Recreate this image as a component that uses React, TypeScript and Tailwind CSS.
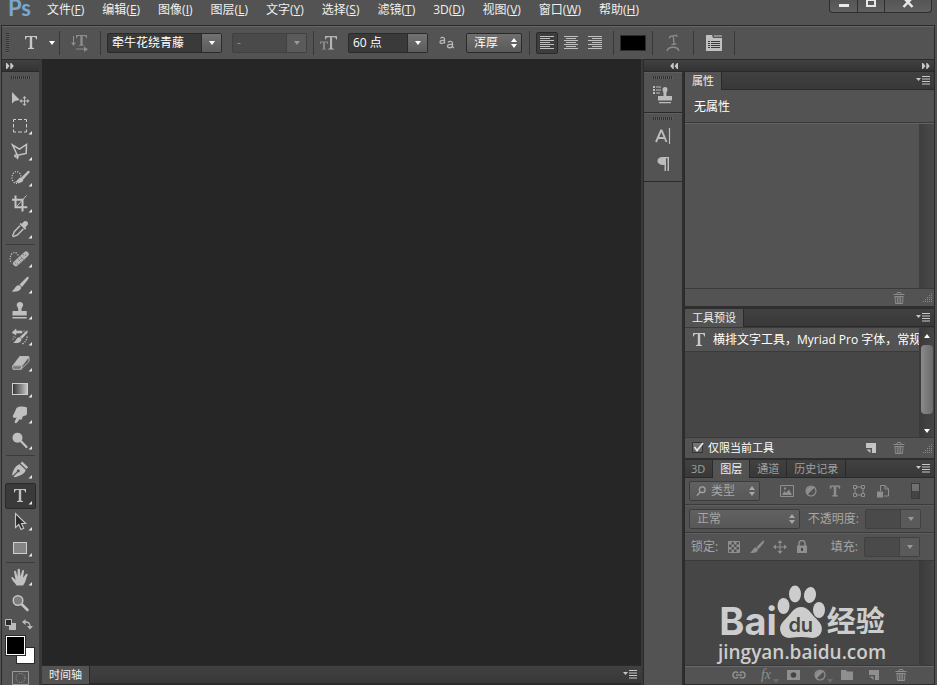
import type { ReactNode } from "react"
import { useState } from "react"
import clsx from "clsx"

const menus = [
  { label: "文件", hotkey: "F" },
  { label: "编辑", hotkey: "E" },
  { label: "图像", hotkey: "I" },
  { label: "图层", hotkey: "L" },
  { label: "文字", hotkey: "Y" },
  { label: "选择", hotkey: "S" },
  { label: "滤镜", hotkey: "T" },
  { label: "3D", hotkey: "D" },
  { label: "视图", hotkey: "V" },
  { label: "窗口", hotkey: "W" },
  { label: "帮助", hotkey: "H" },
]

type Tool = { name: string; icon: ReactNode; single?: boolean }

const typeGlyph = (
  <path d="M6 5h12v3.500h-.8c-.3-1.700-.8-2.500-2.300-2.500h-1.700v9.800c0 1 .4 1.300 1.800 1.300v.9H9v-.9c1.400 0 1.800-.3 1.800-1.300V6H9.100c-1.500 0-2 .8-2.300 2.500H6z" />
)

const toolGroups: Tool[][] = [
  [
    {
      name: "移动工具",
      single: true,
      icon: (
        <>
          <path d="M4 4v11.500l2.800-2.500 5-1z" />
          <path d="M16.500 8l2 2.300h-1.500v2.200h2.300V11l2.200 2-2.200 2v-1.500H17v2.300h1.500l-2 2.200-2-2.200H16v-2.300h-2.300V15l-2.200-2 2.200-2v1.500H16v-2.200h-1.500z" />
        </>
      ),
    },
    {
      name: "矩形选框工具",
      icon: <path d="M5.500 8V5.500H8m2 0h4m2 0h2.500V8m0 2v3.500m0 2V18H16m-2 0h-4m-2 0H5.500v-2.500m0-2V10" fill="none" stroke="#cfcfcf" />,
    },
    {
      name: "多边形套索工具",
      icon: (
        <path d="M9.500 15.500L4.500 5l7 4.200 7-4.700-.3 9-8.700 1.700c-2-.8-3.300 0-2.500 1.200s3.300.8 3-.8m-.5.400c.8.500.7 1.500-.5 3" fill="none" stroke="#c4c4c4" strokeWidth="1.500" />
      ),
    },
    {
      name: "快速选择工具",
      icon: (
        <>
          <ellipse cx="8.500" cy="11.500" rx="4.500" ry="6" fill="none" stroke="#c4c4c4" strokeWidth="1.200" strokeDasharray="1.200 1.300" />
          <path d="M21.500 5L20 4.800l-6.500 6.400 2 2L21.500 6.500z" />
          <path d="M13 11.500c1.500 0 2.700 1.300 2.300 2.800-1 3-6 3-9 1.700 3-.3 4-4.500 6.700-4.500z" />
        </>
      ),
    },
    {
      name: "裁剪工具",
      icon: (
        <>
          <path d="M7.500 3.500v11.800h11.800M4 7.700h10.500v11.800" fill="none" stroke="#c4c4c4" strokeWidth="2" />
          <path d="M18.500 3.500L8.500 14.500" fill="none" stroke="#c4c4c4" />
        </>
      ),
    },
    {
      name: "吸管工具",
      icon: (
        <>
          <path d="M19.300 3.700c-1.200-1.200-2.800-.8-3.800.2l-1.800 1.900-1-.9-1.200 1.200 5.600 5.600 1.200-1.200-1-1 1.800-1.900c1-1 1.400-2.700.2-3.900z" />
          <path d="M12 7.700L6.500 13.500c-.8.900-.5 2-1.600 3.500-.5.800.600 1.900 1.400 1.300 1.300-1 2.500-.7 3.300-1.500L15.300 11" fill="none" stroke="#c4c4c4" strokeWidth="1.400" />
        </>
      ),
    },
  ],
  [
    {
      name: "污点修复画笔工具",
      icon: (
        <>
          <ellipse cx="6.500" cy="11.500" rx="4.300" ry="6" fill="none" stroke="#c4c4c4" strokeWidth="1.200" strokeDasharray="1.200 1.300" />
          <path d="M7.500 17L18.500 6.800" stroke="#535353" strokeWidth="8" strokeLinecap="round" />
          <path d="M7.800 16.500L18 7.200" stroke="#b4b4b4" strokeWidth="5.500" strokeLinecap="round" />
          <path d="M9.800 11.800l4.500 4.500M12.500 9.300l4.300 4.500" stroke="#777" strokeWidth=".7" />
          <path d="M7 16h1m1 1h1m5-9.500h1m1 1h1m-5 3.500h1m-2 0h.6" stroke="#666" strokeWidth=".8" />
        </>
      ),
    },
    {
      name: "画笔工具",
      icon: (
        <>
          <path d="M20.500 3.700c-1-.2-1.500.3-2.200 1L11.500 11.500l2.500 2.500 6-7.500c.6-.9 1-1.800.5-2.800z" />
          <path d="M10.500 12.200c1.700.1 2.900 1.300 2.600 2.900-.8 3.400-6 4.200-9.800 3.200 3.500-.8 3.700-6 7.200-6.100z" />
        </>
      ),
    },
    {
      name: "仿制图章工具",
      icon: (
        <>
          <path d="M12 3c2 0 3.200 1.400 3.200 3s-1.700 2.500-1.700 4v2h5.200v4.500H4.500V12h5.700v-2c0-1.500-1.500-2.400-1.500-4S10 3 12 3z" />
          <path d="M4.500 18h14.200v1.500H4.500z" />
        </>
      ),
    },
    {
      name: "历史记录画笔工具",
      icon: (
        <>
          <path d="M19.500 5.500c-.8 0-1 .2-1.500.8L12 11.800l2 2 5.500-6z" />
          <path d="M11.200 12.300c1.500.1 2.500 1.200 2.200 2.600-.7 2.800-5 3.800-8.400 2.900 3-.8 3.200-5.400 6.200-5.500z" />
          <path d="M4 7.500l4-3.500v2h6v2H8v2zM15 6h2M5 11.500l3 1M4 14h2" stroke="#c4c4c4" strokeWidth=".6" />
          <path d="M19 11.500c0 3-1.500 6-5 7.500" fill="none" stroke="#c4c4c4" strokeWidth="1.300" strokeDasharray="1.300 1.300" />
        </>
      ),
    },
    {
      name: "橡皮擦工具",
      icon: (
        <>
          <path d="M11.500 5.500h9.500L13 18.300H5l-.5-3.500z" fill="#777" />
          <path d="M11.500 5.500h9.500l-6.700 8.800H4.800z" fill="#bdbdbd" />
          <path d="M4.500 14.800h9.300l-.8 3.500H5zM21 6v4.500l-8 7.800.8-3.500zM11.500 5.500h9.500" fill="none" stroke="#b8b8b8" />
        </>
      ),
    },
    {
      name: "渐变工具",
      icon: <rect x="4.500" y="6.500" width="15" height="11" fill="url(#tool-gradient)" stroke="#cfcfcf" />,
    },
    {
      name: "涂抹工具",
      icon: (
        <path d="M8.500 5c3-1.800 7-1.800 10.500-.5v6.700c-1.200 1.800-3 1.300-4.200 2.300-.8 1-.3 2.500-1.300 3-.8.400-1.400 0-1.700-.6l-3 3.800c-.8 1-2.500.2-2.100-1.200l2-4.200c-1.600 1-3 .7-3.700-.3-.7-1.500 2-4.500 3.500-9z" />
      ),
    },
    {
      name: "减淡工具",
      icon: (
        <>
          <circle cx="9.500" cy="8.700" r="5" />
          <path d="M13 12.200l5.500 5.800" stroke="#c4c4c4" strokeWidth="2.200" strokeLinecap="round" />
        </>
      ),
    },
  ],
  [
    {
      name: "钢笔工具",
      icon: (
        <>
          <path d="M14.200 3.500l6 5.700-1.800 1.800-6-5.700z" />
          <path d="M11.700 6.300l6 5.700c-.8 3.500-5 5.800-11.400 7.200l-.7-.7 4.200-4.200a1.500 1.500 0 1 0-.9-.9l-4.200 4.200-.6-.6C5.500 11.200 8 7 11.700 6.300z" />
        </>
      ),
    },
    { name: "横排文字工具", icon: typeGlyph },
    {
      name: "路径选择工具",
      icon: <path d="M7.500 3.500v14l3.300-3 2.200 5 2.700-1.200-2.200-4.800h4.200z" fill="#2b2b2b" stroke="#c8c8c8" strokeWidth="1.100" />,
    },
    {
      name: "矩形工具",
      icon: <rect x="5.500" y="6.500" width="13" height="11" fill="#858585" stroke="#cfcfcf" />,
    },
  ],
  [
    {
      name: "抓手工具",
      icon: (
        <path d="M8.500 20.500c-.8-2-3.700-4-5-7-.5-1.500 1-1.800 1.900-.8l2.200 2.200-1.500-8c-.2-1.400 1.500-1.700 1.900-.3l1.500 5.200.2-7c0-1.400 2-1.400 2.200 0l.5 6.800 1.700-5.900c.4-1.300 2.200-.8 1.900.5l-1 6.500 2.800-3.500c.9-1 2.300-.2 1.700 1-1.500 2.800-1.700 7.300-4.500 10.300z" />
      ),
    },
    {
      name: "缩放工具",
      single: true,
      icon: (
        <>
          <circle cx="10" cy="9.500" r="4.800" fill="#7d7d7d" stroke="#c4c4c4" strokeWidth="1.500" />
          <path d="M14 13.500l5.500 5.500" stroke="#c4c4c4" strokeWidth="2.500" strokeLinecap="round" />
        </>
      ),
    },
  ],
]

function CaretDown({ className }: { className?: string }) {
  return (
    <svg viewBox="0 0 6 4" className={clsx("h-1 w-1.5", className)} fill="currentColor">
      <path d="M0 0h6L3 4z" />
    </svg>
  )
}

function Grip({ vertical = false }: { vertical?: boolean }) {
  return vertical ? (
    <div className="h-5 w-[3px] bg-[repeating-linear-gradient(180deg,#323232_0_1px,#5c5c5c_1px_2px)]" />
  ) : (
    <div className="h-[3px] w-5 bg-[repeating-linear-gradient(90deg,#323232_0_1px,#5c5c5c_1px_2px)]" />
  )
}

function Divider({ className }: { className?: string }) {
  return <div className={clsx("h-6 w-px shrink-0 bg-[#383838]", className)} />
}

function Chevrons({ left = false, label }: { left?: boolean; label: string }) {
  return (
    <button type="button" aria-label={label} className="text-[#c8c8c8]">
      <svg viewBox="0 0 8 6" className={clsx("h-1.5 w-2", left && "rotate-180")} fill="currentColor">
        <path d="M0 0h1l2.500 3L1 6H0zM4.300 0h1l2.500 3-2.500 3h-1z" />
      </svg>
    </button>
  )
}

type DropdownProps = {
  label: string
  value: string
  className?: string
  disabled?: boolean
}

// sunken value with a raised arrow button at its right end
function ComboBox({ label, value, className, disabled }: DropdownProps) {
  return (
    <div
      className={clsx(
        "relative h-5 shrink-0 rounded-xs border",
        disabled ? "border-[#404040] bg-[#4a4a4a] text-[#8f8f8f]" : "border-[#2a2a2a] bg-[#3a3a3a] text-white",
        className,
      )}
    >
      <select aria-label={label} defaultValue={value} disabled={disabled} className="block h-full w-full appearance-none pl-1 text-xs leading-4 opacity-100 outline-none">
        <option>{value}</option>
      </select>
      <span
        className={clsx(
          "pointer-events-none absolute inset-y-0 right-0 flex w-5 items-center justify-center border-l",
          disabled ? "border-[#404040] bg-[#5a5a5a] text-[#9a9a9a]" : "border-[#2a2a2a] bg-linear-to-b from-[#727272] to-[#5c5c5c] text-white",
        )}
      >
        <CaretDown />
      </span>
    </div>
  )
}

// raised pop-up list with up and down arrows
function PopupList({ label, value, className, children }: DropdownProps & { children?: ReactNode }) {
  return (
    <div className={clsx("relative h-5 shrink-0 rounded-xs border bg-linear-to-b", className)}>
      {children}
      <select
        aria-label={label}
        defaultValue={value}
        className={clsx("block h-full w-full appearance-none text-xs leading-4 outline-none", children ? "pl-[21px]" : "pl-[7px]")}
      >
        <option>{value}</option>
      </select>
      <svg viewBox="0 0 6 10" className="pointer-events-none absolute top-1 right-1 h-2.5 w-1.5" fill="currentColor">
        <path d="M3 0l3 4H0zM3 10l3-4H0z" />
      </svg>
    </div>
  )
}

function PanelMenuButton() {
  return (
    <button type="button" aria-label="面板菜单" className="mr-1 ml-auto self-center text-[#c8c8c8]">
      <svg viewBox="0 0 14 9" className="h-[9px] w-3.5" fill="currentColor">
        <path d="M0 2h5L2.500 5zM6 0h8v1H6zM6 2.500h8v1H6zM6 5h8v1H6zM6 7.500h8v1H6z" />
      </svg>
    </button>
  )
}

function PanelTabs({ tabs, active }: { tabs: string[]; active: string }) {
  return (
    <div className="flex h-[18px] shrink-0 bg-linear-to-b from-[#414141] to-[#383838]">
      {tabs.map((tab) => (
        <button
          key={tab}
          type="button"
          className={clsx(
            "border-r border-[#2a2a2a] px-[7px] text-[11px] leading-4",
            tab === active ? "bg-[#535353] text-[#f0f0f0]" : "border-b text-[#a0a0a0]",
            tabs.length === 1 || "first:pl-1.5 not-first:px-[7px]",
          )}
        >
          {tab}
        </button>
      ))}
      <div className="flex grow border-b border-[#2a2a2a]">
        <PanelMenuButton />
      </div>
    </div>
  )
}

function TrashIcon() {
  return (
    <svg viewBox="0 0 12 12" className="h-3 w-3" fill="none" stroke="currentColor">
      <path d="M.5 2.500h11M4 2.500v-1q0-1 1-1h2q1 0 1 1v1M1.500 4.500h9M2 4.500l.5 7h7l.5-7M4.300 5v6M6 5v6M7.700 5v6" />
    </svg>
  )
}

function NewItemIcon() {
  return (
    <svg viewBox="0 0 12 12" className="h-3 w-3" fill="currentColor">
      <path d="M1 1h10v10H7V6H1zM1.500 7.500H5.500V11z" />
    </svg>
  )
}

function AdjustIcon() {
  return (
    <svg viewBox="0 0 12 12" className="h-3 w-3">
      <circle cx="6" cy="6" r="5" fill="none" stroke="currentColor" strokeWidth="1.200" />
      <path d="M9.500 2.500A5 5 0 0 0 2.500 9.500z" fill="currentColor" />
    </svg>
  )
}

function ResizeCorner() {
  return (
    <svg viewBox="0 0 9 9" className="h-[9px] w-[9px]" fill="#8a8a8a">
      <path d="M8 0h1v1H8zM8 2h1v1H8zM6 2h1v1H6zM8 4h1v1H8zM6 4h1v1H6zM4 4h1v1H4zM8 6h1v1H8zM6 6h1v1H6zM4 6h1v1H4zM2 6h1v1H2zM8 8h1v1H8zM6 8h1v1H6zM4 8h1v1H4zM2 8h1v1H2zM0 8h1v1H0z" />
    </svg>
  )
}

function IconButton({ label, className, children }: { label: string; className?: string; children: ReactNode }) {
  return (
    <button type="button" aria-label={label} className={clsx("flex shrink-0 items-center justify-center", className)}>
      {children}
    </button>
  )
}

function TitleBar() {
  return (
    <header className="flex h-[25px] shrink-0 items-start">
      <div className="w-[38px] pl-2 font-['Lato'] text-[22px] leading-4 font-bold text-[#7aa7d0]">Ps</div>
      <nav className="flex whitespace-nowrap">
        {menus.map((menu) => (
          <button key={menu.label} type="button" className="px-[9px] text-xs leading-5 text-[#f0f0f0]">
            {menu.label}(<u>{menu.hotkey}</u>)
          </button>
        ))}
      </nav>
      <div className="mr-[5px] ml-auto flex h-[13px] rounded-b-sm border border-t-0 border-[#2e2e2e] bg-linear-to-b from-[#555] to-[#606060] text-[#e8e8e8]">
        <IconButton label="最小化" className="w-7 border-r border-[#2e2e2e]">
          <svg viewBox="0 0 12 12" className="h-3 w-3" fill="currentColor">
            <path d="M1 4h10v3H1z" />
          </svg>
        </IconButton>
        <IconButton label="最大化" className="w-[27px] border-r border-[#2e2e2e]">
          <svg viewBox="0 0 12 12" className="h-3 w-3" fill="none" stroke="currentColor" strokeWidth="2">
            <path d="M2 0v6h8V0" />
            <path d="M2 .5h8" strokeWidth="1" />
          </svg>
        </IconButton>
        <IconButton label="关闭" className="w-[46px]">
          <svg viewBox="0 0 12 12" className="h-3 w-3" fill="none" stroke="currentColor" strokeWidth="2.500">
            <path d="M1.500-2.500l9 9.500M10.500-2.500l-9 9.500" />
          </svg>
        </IconButton>
      </div>
    </header>
  )
}

function AlignIcon({ align }: { align: "left" | "center" | "right" }) {
  const widths = [14, 10, 14, 10, 14, 10, 14]
  return (
    <svg viewBox="0 0 14 14" className="h-3.5 w-3.5" fill="#c0c0c0">
      {widths.map((w, i) => (
        <rect key={i} x={align === "left" ? 0 : align === "center" ? (14 - w) / 2 : 14 - w} y={i * 2} width={w} height="1" />
      ))}
    </svg>
  )
}

function OptionsBar() {
  const [align, setAlign] = useState<"left" | "center" | "right">("left")
  const alignments = [
    { value: "left", label: "左对齐" },
    { value: "center", label: "居中对齐" },
    { value: "right", label: "右对齐" },
  ] as const

  return (
    <div className="mr-0.5 ml-px flex h-[34px] shrink-0 items-center border-x border-t border-[#2a2a2a] pl-1 shadow-[inset_0_1px_#666]">
      <Grip vertical />
      <IconButton label="工具预设" className="ml-4 h-5 gap-3 text-[#c8c8c8]">
        <svg viewBox="6 5 12 13" className="h-[13px] w-3" fill="currentColor">
          {typeGlyph}
        </svg>
        <CaretDown className="text-white" />
      </IconButton>
      <Divider className="mx-1" />
      <IconButton label="切换文本取向" className="w-8 text-[#8c8c8c]">
        <svg viewBox="0 0 18 18" className="h-[18px] w-[18px]" fill="currentColor">
          <path d="M5 1h11v3.300h-.8c-.2-1.500-.8-2.200-2-2.200h-1.500v7.900c0 .8.500 1 1.500 1v.8H7.800V11c1 0 1.500-.2 1.500-1V2.100H7.800c-1.200 0-1.800.7-2 2.200H5z" />
          <path d="M2.500 2v8M5 15h9" stroke="currentColor" />
          <path d="M0 8.500h5L2.500 12zM13 12.500V18l4-2.700z" />
        </svg>
      </IconButton>
      <Divider className="mr-1.5 ml-1" />
      <ComboBox label="字体" value="牵牛花绕青藤" className="w-[115px]" />
      <ComboBox label="字体样式" value="-" disabled className="ml-2.5 w-[75px]" />
      <Divider className="mx-1.5" />
      <svg viewBox="0 0 18 16" className="h-4 w-[18px] shrink-0" fill="#b4b4b4">
        <path d="M5 1h12v3.500h-.8c-.3-1.600-.9-2.300-2.400-2.300h-1.700v10.300c0 .9.500 1.200 1.800 1.200v.8H8.200v-.8c1.300 0 1.800-.3 1.800-1.200V2.200H8.200C6.700 2.200 6.100 2.900 5.800 4.500H5z" />
        <path d="M0 6.500h8V9h-.7c-.2-1-.6-1.400-1.500-1.400h-.9v5.600c0 .6.300.8 1.200.8v.6H1.900V14c.9 0 1.200-.2 1.200-.8V7.600h-.9c-.9 0-1.300.4-1.500 1.400H0z" fill="#8e8e8e" />
      </svg>
      <ComboBox label="字体大小" value="60 点" className="ml-2.5 w-20" />
      <svg viewBox="0 0 16 14" className="mx-[11px] h-3.5 w-4 shrink-0" fill="none" stroke="#b8b8b8" strokeWidth="1.300">
        <path d="M1.500 2.500c1-1.500 4-1.500 4 .5v4.500M5.500 4.500c-3-.3-4.500.2-4.500 1.600 0 1.800 3.500 1.800 4.500-.4M9 6.500c1-1.500 4.500-1.500 4.500.5v4l1.500 1M13.500 8.500c-3-.3-5 .2-5 1.800 0 2 4 2 5-.4" />
      </svg>
      <PopupList label="消除锯齿" value="浑厚" className="w-14 border-[#2a2a2a] from-[#6e6e6e] to-[#5a5a5a] text-white" />
      <Divider className="mr-1.5 ml-[7px]" />
      <div className="flex gap-0.5">
        {alignments.map((item) => (
          <button
            key={item.value}
            type="button"
            aria-label={item.label}
            aria-pressed={align === item.value}
            onClick={() => setAlign(item.value)}
            className={clsx("flex h-[22px] w-[22px] items-center justify-center rounded-xs border", align === item.value ? "border-[#2a2a2a] bg-[#3d3d3d]" : "border-transparent")}
          >
            <AlignIcon align={item.value} />
          </button>
        ))}
      </div>
      <Divider className="mr-1.5 ml-[7px]" />
      <button type="button" aria-label="文本颜色" className="h-4 w-[26px] border border-[#2e2e2e] bg-black" />
      <Divider className="ml-1.5" />
      <IconButton label="创建文字变形" className="w-10">
        <svg viewBox="0 0 14 18" className="h-[18px] w-3.5" fill="none" stroke="#8c8c8c" strokeWidth="1.300">
          <path d="M3.500 4.500l.3-2 6.700-1.300.7 1.800M7.300 2l.7 8M5.500 10.700l5-.9M1 17c1.500-5 10.500-5 12 0" />
        </svg>
      </IconButton>
      <Divider />
      <IconButton label="切换字符和段落面板" className="w-10">
        <svg viewBox="0 0 16 17" className="h-[17px] w-4">
          <path d="M0 1h6l1 3h9v13H0z" fill="#c0c0c0" />
          <path d="M7.500 1H16v2H8z" fill="#8e8e8e" />
          <path d="M2 7.500h2m1 0h9M2 9.500h2m1 0h9M2 11.500h2m1 0h9M2 13.500h2m1 0h9" stroke="#3a3a3a" />
        </svg>
      </IconButton>
      <Divider />
    </div>
  )
}

function Toolbar() {
  const [activeTool, setActiveTool] = useState("横排文字工具")

  return (
    <aside className="flex w-[37px] shrink-0 flex-col">
      <div className="flex h-[13px] shrink-0 items-center border-y border-[#2a2a2a] bg-linear-to-b from-[#414141] to-[#333] pl-1">
        <Chevrons label="展开面板" />
      </div>
      <div className="flex h-[15px] shrink-0 items-start justify-center pt-1">
        <Grip />
      </div>
      {toolGroups.map((group, i) => (
        <div key={i} className={clsx("flex flex-col items-center", i > 0 && "before:my-px before:h-px before:w-[29px] before:bg-[#3a3a3a]")}>
          {group.map((tool) => (
            <button
              key={tool.name}
              type="button"
              aria-label={tool.name}
              onClick={() => setActiveTool(tool.name)}
              className={clsx(
                "flex h-[26px] w-[31px] items-center rounded-xs border pl-0.5",
                activeTool === tool.name ? "border-[#2a2a2a] bg-[#3a3a3a]" : "border-transparent",
              )}
            >
              <svg viewBox="0 0 24 24" className="h-6 w-6 shrink-0" fill="#c0c0c0">
                <defs>
                  <linearGradient id="tool-gradient">
                    <stop offset="0" stopColor="#333" />
                    <stop offset="1" stopColor="#c8c8c8" />
                  </linearGradient>
                </defs>
                {tool.icon}
                {!tool.single && <path d="M24 17v3.500h-3.500z" fill="#e8e8e8" />}
              </svg>
            </button>
          ))}
        </div>
      ))}
      <div className="flex h-4 shrink-0 items-center justify-between pr-1.5 pl-[3px]">
        <IconButton label="默认前景色和背景色">
          <svg viewBox="0 0 11 11" className="h-[11px] w-[11px]">
            <path d="M4 4h7v7H4z" fill="#bbb" />
            <path d="M.5.5h6v6h-6z" fill="#2a2a2a" stroke="#bbb" />
          </svg>
        </IconButton>
        <IconButton label="切换前景色和背景色">
          <svg viewBox="0 0 11 11" className="h-[11px] w-[11px]" fill="#bbb">
            <path d="M0 3l3.500-3v2.300c3.500 0 5 1.700 5 4.700H11l-3 3.500L5 7h2.300c0-2-1.300-3.200-3.800-3.200V6z" />
          </svg>
        </IconButton>
      </div>
      <div className="mt-1 grid h-[34px] shrink-0 grid-cols-[10px_9px_10px] grid-rows-[11px_8px_9px] pl-1">
        <button type="button" aria-label="背景色" className="col-[2/4] row-[2/4] border border-[#2a2a2a] bg-white" />
        <button type="button" aria-label="前景色" className="z-10 col-[1/3] row-[1/3] border border-white bg-black outline outline-[#2a2a2a]" />
      </div>
      <IconButton label="以快速蒙版模式编辑" className="h-4 shrink-0">
        <svg viewBox="0 0 17 14" className="h-3.5 w-[17px]" fill="none" stroke="#999">
          <path d="M.5.5h16v13H.5z" />
          <circle cx="8.500" cy="7" r="4.500" strokeDasharray="1.200 1.200" />
        </svg>
      </IconButton>
    </aside>
  )
}

function CanvasArea() {
  return (
    <main className="flex min-w-0 grow flex-col border-r-2 border-l-3 border-[#3a3a3a]">
      <div className="grow bg-[#262626]" />
      <div className="shrink-0 border-y border-[#2a2a2a] shadow-[inset_0_1px_#444]">
        <PanelTabs tabs={["时间轴"]} active="时间轴" />
      </div>
    </main>
  )
}

function Dock() {
  return (
    <div className="flex w-10 shrink-0 flex-col border-r-2 border-[#2e2e2e] text-[#bcbcbc]">
      <div className="flex h-[41px] flex-col items-center border-b border-[#2a2a2a] pt-1 shadow-[inset_0_1px_#5e5e5e]">
        <Grip />
        <IconButton label="仿制源" className="h-8 w-7">
          <svg viewBox="0 0 20 18" className="h-[18px] w-5" fill="currentColor">
            <path d="M0 0h2v2H0zM3 .5h5v1H3zM0 3h2v2H0zM3 3.500h5v1H3zM0 6h2v2H0zM3 6.500h4v1H3z" />
            <path d="M12 1c1.600 0 2.500 1 2.500 2.500S13.400 6 13.400 7.500V10H19v4.500H5V10h5.500V7.500C10.500 6 9.500 5 9.500 3.500S10.400 1 12 1zM6 16h12v1.200H6z" />
          </svg>
        </IconButton>
      </div>
      <div className="flex h-[69px] flex-col items-center border-b border-[#2a2a2a] pt-1 shadow-[inset_0_1px_#5e5e5e]">
        <Grip />
        <IconButton label="字符" className="mt-0.5 h-7 w-7">
          <svg viewBox="0 0 16 18" className="h-[18px] w-4" fill="none" stroke="currentColor">
            <path d="M1 15L6 3.500h.7L11.500 15M3 11h7" strokeWidth="1.900" />
            <path d="M14.500 1v16" strokeWidth="1.200" />
          </svg>
        </IconButton>
        <IconButton label="段落" className="h-7 w-7">
          <svg viewBox="0 0 14 16" className="h-4 w-3.5" fill="currentColor">
            <path d="M13 1v14h-1.500V2.200H10V15H8.500V9C4 9 1.500 7.500 1.500 5s2-4 5.500-4z" />
          </svg>
        </IconButton>
      </div>
    </div>
  )
}

function PropertiesPanel() {
  return (
    <section className="flex shrink-0 flex-col border-b-2 border-[#2e2e2e]">
      <PanelTabs tabs={["属性"]} active="属性" />
      <p className="h-[33px] border-b border-[#3a3a3a] px-[9px] text-xs leading-[34px] text-white">无属性</p>
      <div className="flex h-[165px] justify-end border-t border-[#646464]">
        <div className="w-[15px] bg-linear-to-r from-[#3e3e3e] to-[#4a4a4a]" />
      </div>
      <div className="flex h-[18px] items-center justify-end border-t border-[#3a3a3a] pr-0.5 text-[#8a8a8a]">
        <IconButton label="删除属性" className="mr-[18px]">
          <TrashIcon />
        </IconButton>
        <ResizeCorner />
      </div>
    </section>
  )
}

function ToolPresetsPanel() {
  return (
    <section className="flex shrink-0 flex-col border-y border-[#2e2e2e]">
      <PanelTabs tabs={["工具预设"]} active="工具预设" />
      <div className="flex h-[111px] border-y border-[#3a3a3a] bg-[#464646]">
        <ul className="min-w-0 grow">
          <li className="flex h-6 items-center gap-2 overflow-hidden border-b border-[#3a3a3a] bg-[#535353] pl-2 text-xs whitespace-nowrap text-white">
            <svg viewBox="6 5 12 13" className="h-[13px] w-3 shrink-0" fill="#c8c8c8">
              {typeGlyph}
            </svg>
            横排文字工具，Myriad Pro 字体，常规
          </li>
        </ul>
        <div className="flex w-[15px] shrink-0 flex-col items-center justify-between bg-linear-to-r from-[#3a3a3a] to-[#464646] pt-1.5 pb-1 text-white">
          <CaretDown className="rotate-180" />
          <div className="mb-2 h-[69px] w-3 rounded-sm bg-linear-to-r from-[#8a8a8a] to-[#6a6a6a]" />
          <CaretDown />
        </div>
      </div>
      <div className="flex h-5 items-center pr-0.5 pl-[7px] text-[#8a8a8a]">
        <label className="flex items-center gap-1 text-[11px] leading-4 text-white">
          <span className="relative h-3 w-3">
            <input
              type="checkbox"
              defaultChecked
              className="peer block h-[11px] w-[11px] appearance-none border border-[#333] bg-linear-to-b from-[#777] to-[#606060]"
            />
            <svg viewBox="0 0 12 12" className="pointer-events-none absolute inset-0 hidden h-3 w-3 peer-checked:block" fill="none" stroke="#e8e8e8" strokeWidth="1.700">
              <path d="M2.500 5l2.500 3.500L11 1" />
            </svg>
          </span>
          仅限当前工具
        </label>
        <IconButton label="创建新的工具预设" className="ml-auto text-[#c4c4c4]">
          <NewItemIcon />
        </IconButton>
        <IconButton label="删除工具预设" className="mr-[18px] ml-4">
          <TrashIcon />
        </IconButton>
        <ResizeCorner />
      </div>
    </section>
  )
}

function LayersPanel() {
  return (
    <section className="flex min-h-0 grow flex-col border-y border-[#2e2e2e] text-[#a6a6a6]">
      <PanelTabs tabs={["3D", "图层", "通道", "历史记录"]} active="图层" />
      <div className="flex h-[27px] shrink-0 items-center border-b border-[#3a3a3a] px-1">
        <PopupList label="滤镜类型" value="类型" className="w-[71px] border-[#3c3c3c] from-[#616161] to-[#585858]">
          <svg viewBox="0 0 12 12" className="pointer-events-none absolute top-1 left-1.5 h-2.5 w-2.5" fill="none" stroke="currentColor" strokeWidth="1.500">
            <circle cx="7.500" cy="4.500" r="3.500" />
            <path d="M5 7.500l-4 4" />
          </svg>
        </PopupList>
        <div className="ml-5 flex items-center gap-2.5 text-[#8f8f8f]">
          <IconButton label="像素图层滤镜" className="w-3.5">
            <svg viewBox="0 0 14 12" className="h-3 w-3.5">
              <path d="M.5.5h13v11H.5z" fill="none" stroke="currentColor" />
              <path d="M2 10l2.500-4L6 8l3-3.500L12 10zM4 2.500h2v2H4z" fill="currentColor" />
            </svg>
          </IconButton>
          <IconButton label="调整图层滤镜" className="w-3.5">
            <AdjustIcon />
          </IconButton>
          <IconButton label="文字图层滤镜" className="w-3.5">
            <svg viewBox="5 4 14 15" className="h-3 w-3" fill="currentColor" stroke="currentColor" strokeWidth=".8">
              {typeGlyph}
            </svg>
          </IconButton>
          <IconButton label="形状图层滤镜" className="w-3.5">
            <svg viewBox="0 0 12 12" className="h-3 w-3" fill="none" stroke="currentColor">
              <path d="M2 3.500v5M10 3.500v5M3.500 2h5M3.500 10h5M.5.5h3v3h-3zM8.500.5h3v3h-3zM.5 8.500h3v3h-3zM8.500 8.500h3v3h-3z" />
            </svg>
          </IconButton>
          <IconButton label="智能对象滤镜" className="w-3.5">
            <svg viewBox="0 0 12 13" className="h-[13px] w-3">
              <path d="M3.500 6V.5H8L11.500 4v7H7M8 .5V4h3.500" fill="none" stroke="currentColor" />
              <path d="M0 6.500h6v6H0z" fill="currentColor" />
            </svg>
          </IconButton>
        </div>
        <button type="button" aria-label="打开或关闭图层滤镜" className="mr-2.5 ml-auto flex h-4 w-[9px] items-start border border-[#3a3a3a] bg-[#444]">
          <span className="block h-[7px] w-full bg-[#707070]" />
        </button>
      </div>
      <div className="flex h-7 shrink-0 items-center border-b border-[#3a3a3a] px-1 text-xs shadow-[inset_0_1px_#5e5e5e]">
        <PopupList label="混合模式" value="正常" className="w-[111px] border-[#3c3c3c] from-[#616161] to-[#585858]" />
        <span className="w-[65px] pr-1.5 text-right whitespace-nowrap">不透明度:</span>
        <ComboBox label="不透明度" value="" disabled className="w-14" />
      </div>
      <div className="flex h-7 shrink-0 items-center border-b border-[#3a3a3a] pl-1.5 text-xs shadow-[inset_0_1px_#5e5e5e]">
        <span className="w-9">锁定:</span>
        <div className="flex grow items-center gap-2 text-[#8f8f8f]">
          <IconButton label="锁定透明像素" className="w-3.5">
            <svg viewBox="0 0 12 12" className="h-3 w-3">
              <path d="M.5.5h11v11H.5z" fill="none" stroke="currentColor" />
              <path d="M1 1h2.500v2.500H1zM6 1h2.500v2.500H6zM3.500 3.500H6V6H3.500zM8.500 3.500H11V6H8.500zM1 6h2.500v2.500H1zM6 6h2.500v2.500H6zM3.500 8.500H6V11H3.500zM8.500 8.500H11V11H8.500z" fill="currentColor" />
            </svg>
          </IconButton>
          <IconButton label="锁定图像像素" className="w-4">
            <svg viewBox="3 3 18 17" className="h-3.5 w-4 shrink-0" fill="currentColor">
              <path d="M20.500 3.700c-1-.2-1.500.3-2.200 1L11.500 11.500l2.500 2.500 6-7.500c.6-.9 1-1.800.5-2.800z" />
              <path d="M10.500 12.200c1.700.1 2.900 1.300 2.600 2.900-.8 3.400-6 4.200-9.800 3.200 3.500-.8 3.700-6 7.200-6.100z" />
            </svg>
          </IconButton>
          <IconButton label="锁定位置" className="w-3.5">
            <svg viewBox="0 0 14 14" className="h-3.5 w-3.5" fill="currentColor">
              <path d="M7 0l2.500 3h-2v3.500H11v-2L14 7l-3 2.500v-2H7.500V11h2L7 14l-2.500-3h2V7.500H3v2L0 7l3-2.500v2h3.500V3h-2z" />
            </svg>
          </IconButton>
          <IconButton label="锁定全部" className="w-3.5">
            <svg viewBox="0 0 12 13" className="h-[13px] w-3">
              <path d="M3 6V3.500a3 3 0 0 1 6 0V6" fill="none" stroke="currentColor" strokeWidth="1.500" />
              <path d="M1 5.500h10V13H1z" fill="currentColor" />
              <path d="M5 8h2v3H5z" fill="#444" />
            </svg>
          </IconButton>
        </div>
        <span className="pr-1.5">填充:</span>
        <ComboBox label="填充" value="" disabled className="mr-3.5 w-14" />
      </div>
      <div className="flex min-h-0 grow bg-[#464646]">
        <div className="flex grow flex-col items-center justify-end text-[#cdcdcd]">
          <Watermark />
        </div>
        <div className="w-[15px] bg-linear-to-r from-[#3a3a3a] to-[#464646]" />
      </div>
      <div className="flex h-[19px] shrink-0 items-center gap-[13px] border-t border-[#3a3a3a] pl-[47px] text-[#8f8f8f] shadow-[inset_0_1px_#6a6a6a]">
        <IconButton label="链接图层" className="w-3.5">
          <svg viewBox="0 0 14 8" className="h-2 w-3.5" fill="none" stroke="currentColor" strokeWidth="1.500">
            <path d="M6 2C5 .5 1 .2 1 4s4 3.500 5 2M8 2c1-1.500 5-1.800 5 2s-4 3.500-5 2M4 4h6" />
          </svg>
        </IconButton>
        <button type="button" aria-label="添加图层样式" className="relative w-3.5 font-['Liberation_Serif'] text-sm leading-4 italic">
          fx
          <CaretDown className="absolute -right-1.5 bottom-0 text-[#6c6c6c]" />
        </button>
        <IconButton label="添加图层蒙版" className="w-3.5">
          <svg viewBox="0 0 13 10" className="h-2.5 w-[13px]">
            <path d="M0 0h13v10H0z" fill="currentColor" />
            <circle cx="6.500" cy="5" r="2.800" fill="#444" />
          </svg>
        </IconButton>
        <IconButton label="创建新的填充或调整图层" className="relative w-3.5">
          <AdjustIcon />
          <CaretDown className="absolute -right-1.5 -bottom-0.5 text-[#6c6c6c]" />
        </IconButton>
        <IconButton label="创建新组" className="w-3.5">
          <svg viewBox="0 0 12 10" className="h-2.5 w-3" fill="currentColor">
            <path d="M0 0h5l1 1.500h6V10H0z" />
          </svg>
        </IconButton>
        <IconButton label="创建新图层" className="w-3.5">
          <NewItemIcon />
        </IconButton>
        <IconButton label="删除图层" className="w-3.5">
          <TrashIcon />
        </IconButton>
      </div>
    </section>
  )
}

function Watermark() {
  return (
    <>
      <div className="flex items-end">
        <span className="font-['Inter'] text-[38px] leading-9 font-bold">Bai</span>
        <span className="relative h-[54px] w-12">
          <svg viewBox="0 0 48 54" className="h-[54px] w-12" fill="currentColor">
            <ellipse cx="6.500" cy="21" rx="6" ry="8" />
            <ellipse cx="18" cy="9" rx="6" ry="8.500" />
            <ellipse cx="33" cy="10" rx="6" ry="8" transform="rotate(10 33 10)" />
            <ellipse cx="42" cy="25" rx="6" ry="8" />
            <path d="M24 22c7 0 9.500 6 14 10.500 5 5 8 8 6.500 14-1.500 5-6 7-11 6.300-6-1-13-1-19 0-5 .7-9.700-1.300-11-6.300-1.500-6 1.500-9 6.500-14C14.500 28 17 22 24 22z" />
          </svg>
          <span className="absolute inset-x-0 bottom-0 text-center font-['Inter'] text-xl leading-7 font-semibold text-[#464646]">du</span>
        </span>
        <span className="pl-0.5 text-[29px] leading-9 font-bold">经验</span>
      </div>
      <div className="font-['Open_Sans'] text-[19px] leading-[26px] font-semibold">jingyan.baidu.com</div>
    </>
  )
}

export default function App() {
  return (
    <div className="flex h-screen flex-col overflow-hidden bg-[#535353] font-['Open_Sans','Noto_Sans_CJK_SC',sans-serif]">
      <TitleBar />
      <OptionsBar />
      <div className="mr-0.5 ml-px flex min-h-0 grow border-x border-[#2a2a2a]">
        <Toolbar />
        <CanvasArea />
        <aside className="flex w-[291px] shrink-0 flex-col border-l border-[#2a2a2a]">
          <div className="flex h-[13px] shrink-0 items-center border-y border-[#2a2a2a] bg-linear-to-b from-[#414141] to-[#333] pr-1 pl-[26px]">
            <Chevrons left label="展开停靠面板" />
            <div className="grow" />
            <Chevrons label="折叠为图标" />
          </div>
          <div className="flex min-h-0 grow">
            <Dock />
            <div className="flex min-w-0 grow flex-col border-l border-[#2a2a2a]">
              <PropertiesPanel />
              <ToolPresetsPanel />
              <LayersPanel />
            </div>
          </div>
        </aside>
      </div>
    </div>
  )
}
